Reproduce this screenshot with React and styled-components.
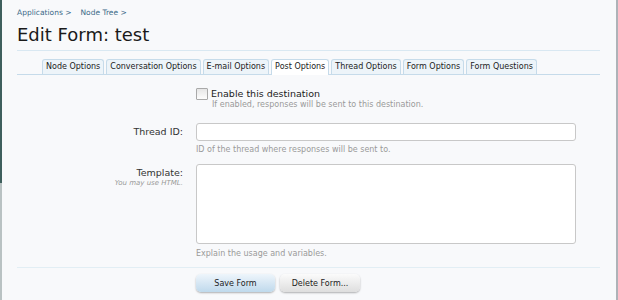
import React from "react";
import styled, { createGlobalStyle } from "styled-components";

const GlobalStyle = createGlobalStyle`
  body {
    margin: 0;
    background: #f8f9fb;
    font-family: "DejaVu Sans", Verdana, sans-serif;
  }
`;

const Frame = styled.div`
  display: flex;
  width: 618px;
  height: 300px;
  overflow: hidden;
  background: #f8f9fb;
`;

const LeftEdge = styled.div`
  width: 2px;
  background: linear-gradient(to bottom, #3f5f5d 0, #3f5f5d 183px, #b9c2c3 183px);
`;

const RightEdge = styled.div`
  width: 2px;
  background: #aeb3b8;
`;

const Content = styled.div`
  flex: 1;
  padding: 0 16px 0 15px;
`;

const Breadcrumb = styled.div`
  display: flex;
  gap: 9px;
  margin-top: 7px;
  font-size: 7.5px;
  line-height: 12px;
  color: #3c6a88;
`;

const Heading = styled.h1`
  margin: 5px 0 0;
  padding-bottom: 4px;
  font-size: 18px;
  line-height: 22px;
  font-weight: normal;
  color: #1a1a1a;
  border-bottom: 1px solid #d9e8f2;
`;

const TabBar = styled.ul`
  display: flex;
  gap: 2px;
  list-style: none;
  margin: 8px 0 0;
  padding: 0 0 0 25px;
  border-bottom: 1px solid #c6dbea;
`;

const Tab = styled.li`
  padding: 0 3px;
  line-height: 14px;
  font-size: 8px;
  color: #222;
  border: 1px solid #c6dbea;
  border-bottom: none;
  border-radius: 3px 3px 0 0;
  background: ${(p) => (p.$active ? "#fff" : "#edf4f9")};
  margin-bottom: ${(p) => (p.$active ? "-1px" : "0")};
  height: ${(p) => (p.$active ? "15px" : "14px")};
`;

const Form = styled.div`
  display: grid;
  grid-template-columns: 166px 380px;
  column-gap: 13px;
  margin-top: 12px;
`;

const Label = styled.div`
  text-align: right;
  font-size: 9.5px;
  color: #333;
  padding-top: ${(p) => p.$top || 0}px;
`;

const Explain = styled.div`
  font-size: 7px;
  font-style: italic;
  color: #999;
  margin-top: 1px;
`;

const Field = styled.div`
  margin-bottom: ${(p) => p.$gap || 0}px;
`;

const CheckLine = styled.label`
  display: flex;
  align-items: center;
  gap: 3px;
  font-size: 9.5px;
  line-height: 13px;
  color: #222;
`;

const Box = styled.span`
  width: 10px;
  height: 10px;
  border: 1px solid #a9a9a9;
  border-radius: 1px;
  background: linear-gradient(#e6e6e6, #fdfdfd);
`;

const Hint = styled.div`
  font-size: 8px;
  line-height: 10px;
  color: #9a9a9a;
  margin-top: ${(p) => p.$top || 0}px;
  padding-left: ${(p) => p.$indent || 0}px;
`;

const Input = styled.div`
  box-sizing: border-box;
  height: ${(p) => p.$h}px;
  border: 1px solid #c8c8c8;
  border-radius: 3px;
  background: #fff;
`;

const Footer = styled.div`
  display: flex;
  gap: 5px;
  margin-top: 8px;
  padding: 6px 0 0 179px;
  border-top: 1px solid #e2eef4;
`;

const Button = styled.button`
  width: ${(p) => p.$w}px;
  height: 18px;
  padding: 0;
  font-family: inherit;
  font-size: 8px;
  color: #222;
  border: none;
  border-radius: 5px;
  box-shadow: 0 1px 2px rgba(0, 0, 0, 0.3);
  background: ${(p) =>
    p.$primary
      ? "linear-gradient(#eef5fb, #bfd9ec)"
      : "linear-gradient(#fbfbfb, #dedede)"};
`;

const tabs = [
  "Node Options",
  "Conversation Options",
  "E-mail Options",
  "Post Options",
  "Thread Options",
  "Form Options",
  "Form Questions",
];

export default function App() {
  return (
    <>
      <GlobalStyle />
      <Frame>
        <LeftEdge />
        <Content>
          <Breadcrumb>
            <span>Applications &gt;</span>
            <span>Node Tree &gt;</span>
          </Breadcrumb>
          <Heading>Edit Form: test</Heading>
          <TabBar>
            {tabs.map((t) => (
              <Tab key={t} $active={t === "Post Options"}>
                {t}
              </Tab>
            ))}
          </TabBar>
          <Form>
            <div />
            <Field $gap={13}>
              <CheckLine>
                <Box />
                Enable this destination
              </CheckLine>
              <Hint $indent={16}>
                If enabled, responses will be sent to this destination.
              </Hint>
            </Field>

            <Label $top={3}>Thread ID:</Label>
            <Field $gap={9}>
              <Input $h={18} />
              <Hint $top={4}>ID of the thread where responses will be sent to.</Hint>
            </Field>

            <Label $top={3}>
              Template:
              <Explain>You may use HTML.</Explain>
            </Label>
            <Field>
              <Input $h={80} />
              <Hint $top={5}>Explain the usage and variables.</Hint>
            </Field>
          </Form>
          <Footer>
            <Button $primary $w={79}>Save Form</Button>
            <Button $w={80}>Delete Form...</Button>
          </Footer>
        </Content>
        <RightEdge />
      </Frame>
    </>
  );
}
